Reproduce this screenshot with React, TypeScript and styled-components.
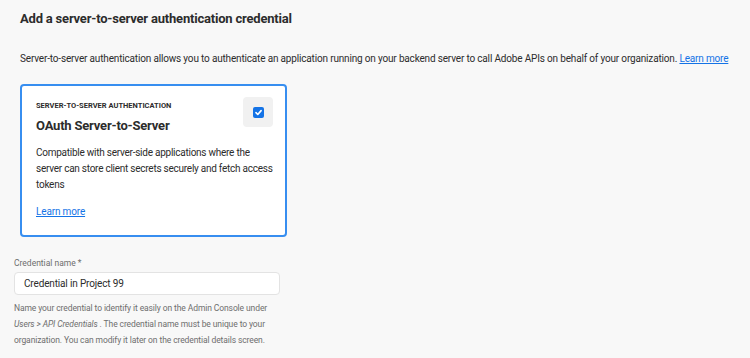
import React from "react";
import styled, { createGlobalStyle } from "styled-components";

const Global = createGlobalStyle`
  html, body { margin: 0; padding: 0; background: #f8f8f8; }
  body { font-family: Roboto, "Liberation Sans", sans-serif; color: #2c2c2c; }
  * { box-sizing: border-box; }
`;

const Page = styled.div`
  width: 750px;
  height: 358px;
  overflow: hidden;
  display: flex;
  flex-direction: column;
  padding-top: 10px;
`;

const Section = styled.div`
  padding: 0 20px;
  display: flex;
  flex-direction: column;
`;

const Title = styled.h2`
  margin: 0;
  font-size: 13px;
  font-weight: 700;
  letter-spacing: -0.2px;
  line-height: 18px;
  color: #2c2c2c;
`;

const Intro = styled.p`
  margin: 23px 0 0 0;
  font-size: 10px;
  letter-spacing: -0.17px;
  line-height: 16px;
  color: #2c2c2c;
  white-space: nowrap;
`;

const Link = styled.a`
  color: #1473e6;
  text-decoration: underline;
  cursor: pointer;
`;

const Card = styled.div`
  margin-top: 17px;
  width: 267px;
  height: 153px;
  background: #fff;
  border: 2px solid #378ef0;
  border-radius: 4px;
  padding: 11px 12px 0 14px;
  display: flex;
  flex-direction: column;
`;

const CardHead = styled.div`
  display: flex;
  justify-content: space-between;
  align-items: flex-start;
`;

const CardTitles = styled.div`
  display: flex;
  flex-direction: column;
  padding-top: 4px;
`;

const Eyebrow = styled.span`
  font-size: 7.5px;
  font-weight: 700;
  text-transform: uppercase;
  line-height: 10px;
  color: #2c2c2c;
`;

const CardName = styled.span`
  margin-top: 6px;
  font-size: 13px;
  font-weight: 700;
  letter-spacing: -0.2px;
  line-height: 18px;
  color: #2c2c2c;
`;

const CheckWrap = styled.div`
  width: 30px;
  height: 30px;
  border-radius: 4px;
  background: #f1f1f1;
  display: flex;
  align-items: center;
  justify-content: center;
`;

const Check = styled.div`
  width: 11px;
  height: 11px;
  border-radius: 2px;
  background: #1473e6;
  display: flex;
  align-items: center;
  justify-content: center;
`;

const CardDesc = styled.p`
  margin: 10px 0 0 0;
  font-size: 10px;
  letter-spacing: -0.25px;
  line-height: 16px;
  color: #2c2c2c;
`;

const CardLink = styled(Link)`
  margin-top: 11px;
  font-size: 10px;
  letter-spacing: -0.15px;
  line-height: 16px;
  align-self: flex-start;
`;

const Field = styled.div`
  margin-top: 20px;
  margin-left: 14px;
  display: flex;
  flex-direction: column;
  width: 266px;
`;

const Label = styled.label`
  font-size: 8.5px;
  line-height: 12px;
  color: #6e6e6e;
`;

const Input = styled.div`
  margin-top: 3px;
  height: 23px;
  background: #fff;
  border: 1px solid #e3e3e3;
  border-radius: 4px;
  padding: 0 9px;
  display: flex;
  align-items: center;
  font-size: 10px;
  letter-spacing: -0.15px;
  color: #2c2c2c;
`;

const Help = styled.p`
  margin: 5px 0 0 0;
  font-size: 8.5px;
  letter-spacing: -0.1px;
  line-height: 16px;
  color: #6e6e6e;
`;

export default function App() {
  return (
    <Page>
      <Global />
      <Section>
        <Title>Add a server-to-server authentication credential</Title>
        <Intro>
          Server-to-server authentication allows you to authenticate an application running on your backend server to call Adobe APIs on behalf of your organization.{" "}
          <Link>Learn more</Link>
        </Intro>
        <Card>
          <CardHead>
            <CardTitles>
              <Eyebrow>Server-to-server authentication</Eyebrow>
              <CardName>OAuth Server-to-Server</CardName>
            </CardTitles>
            <CheckWrap>
              <Check>
                <svg width="9" height="9" viewBox="0 0 10 10">
                  <path d="M2.2 5.2 L4.2 7.2 L7.9 2.9" fill="none" stroke="#fff" strokeWidth="1.8" strokeLinecap="round" strokeLinejoin="round" />
                </svg>
              </Check>
            </CheckWrap>
          </CardHead>
          <CardDesc>
            Compatible with server-side applications where the server can store client secrets securely and fetch access tokens
          </CardDesc>
          <CardLink>Learn more</CardLink>
        </Card>
      </Section>
      <Field>
        <Label>Credential name *</Label>
        <Input>Credential in Project 99</Input>
        <Help>
          Name your credential to identify it easily on the Admin Console under <i>Users &gt; API Credentials</i> . The credential name must be unique to your organization. You can modify it later on the credential details screen.
        </Help>
      </Field>
    </Page>
  );
}
